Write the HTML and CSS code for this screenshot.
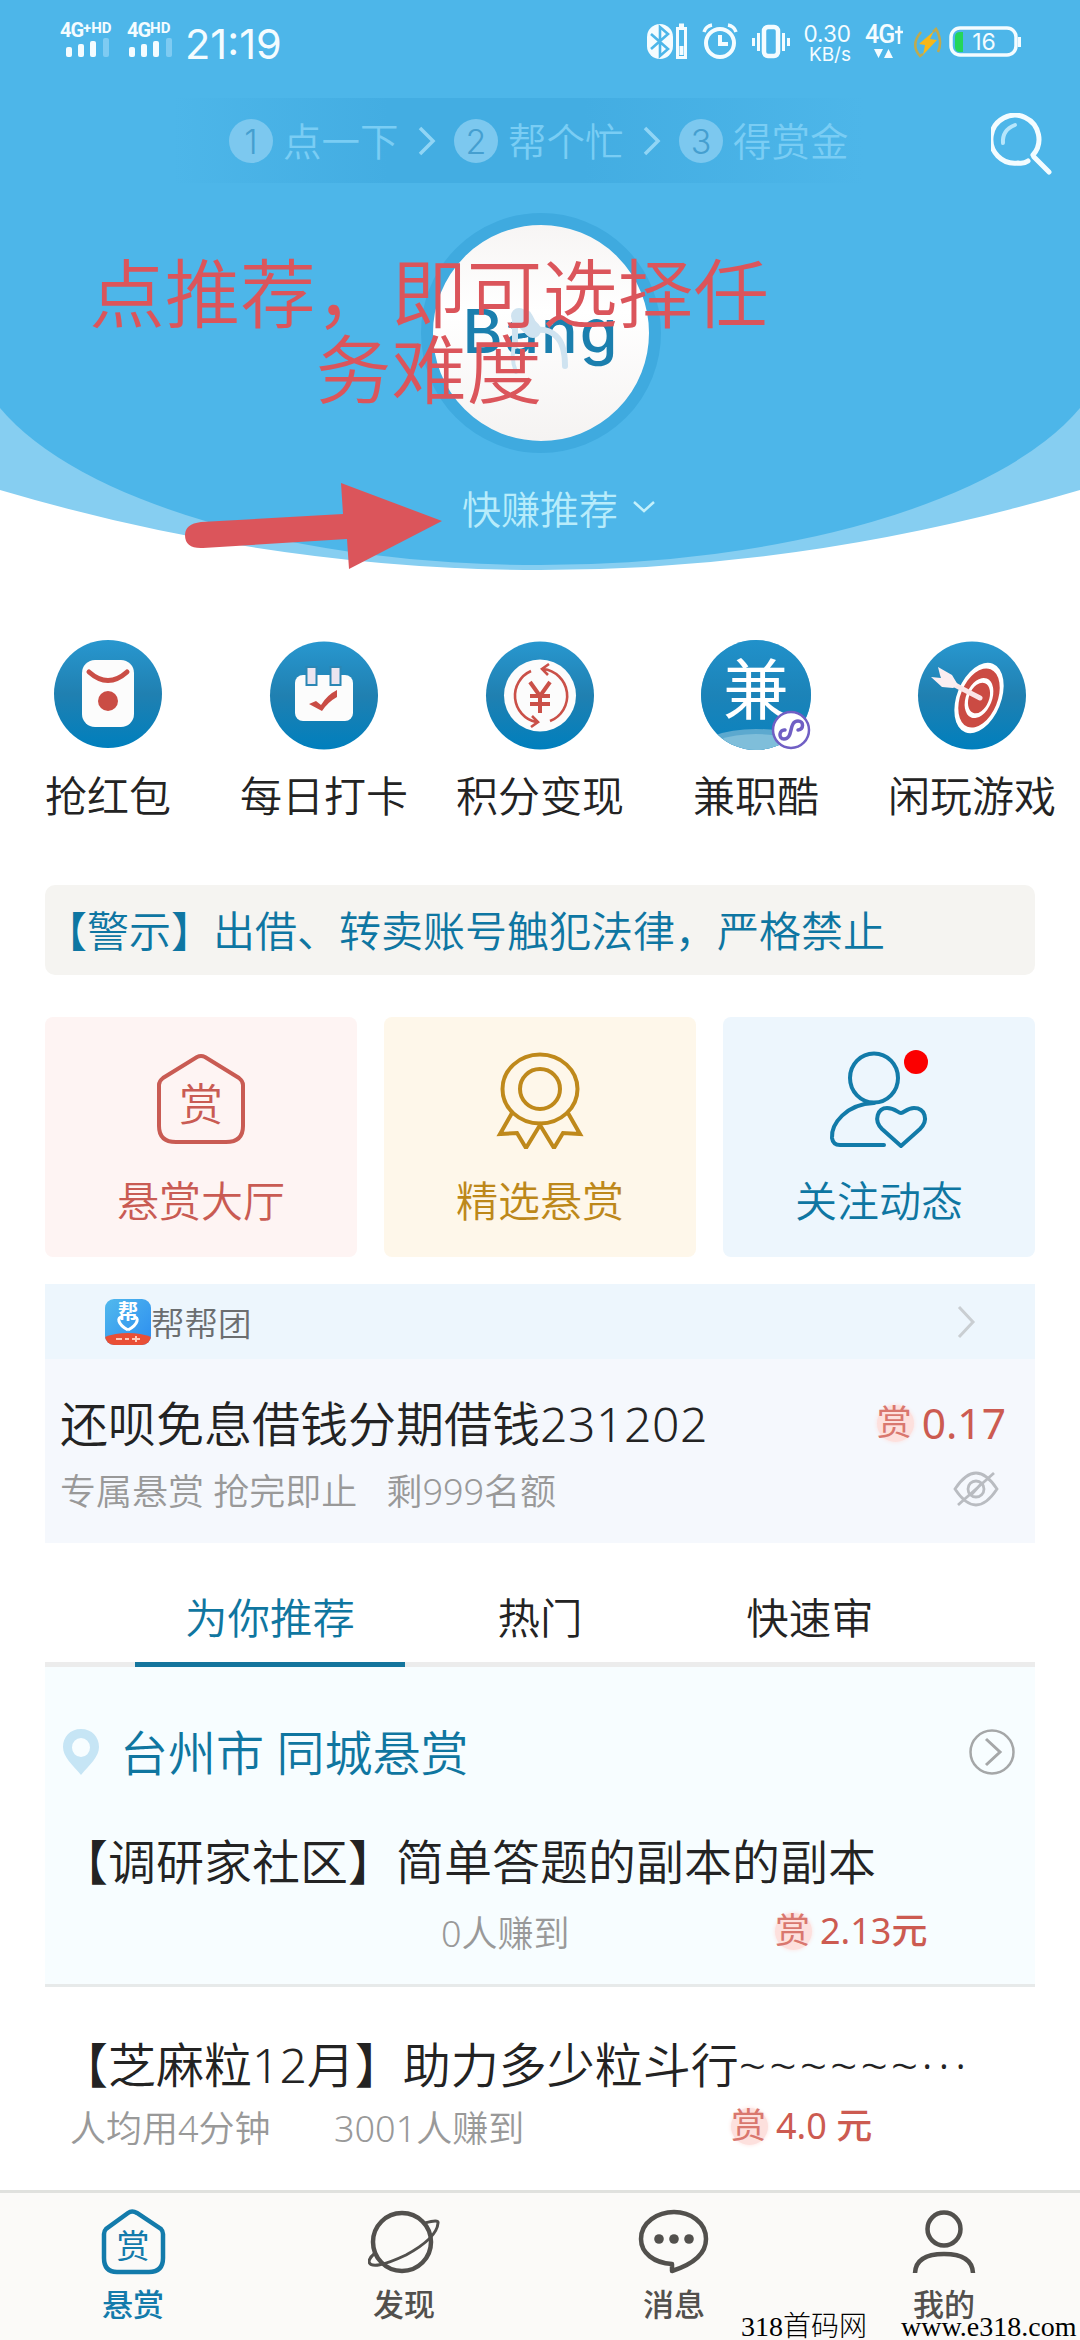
FILE: index.html
```html
<!DOCTYPE html>
<html lang="zh-CN">
<head>
<meta charset="utf-8">
<title>悬赏</title>
<link rel="stylesheet" href="styles.css">
</head>
<body>
<div class="screen">
  <header class="hero">
    <svg class="hero-bg" width="1080" height="570" viewBox="0 0 1080 570">
      <path d="M0 0H1080V490Q540 650 0 490Z" fill="#86cef1"/>
      <path d="M0 0H1080V408A570 231 0 0 1 0 408Z" fill="#4db6e9"/>
    </svg>
    <div class="status">
      <div class="signal">
        <div class="net">4G<sup>+HD</sup></div>
        <svg width="46" height="20" viewBox="0 0 46 20"><g fill="#f4fcff"><rect x="1" y="9" width="6" height="10" rx="2"/><rect x="13" y="6" width="6" height="13" rx="2"/><rect x="25" y="3" width="6" height="16" rx="2"/></g><rect x="38" y="0" width="6" height="19" rx="2" fill="#7ecbf2"/></svg>
      </div>
      <div class="signal signal-two">
        <div class="net">4G<sup>HD</sup></div>
        <svg width="46" height="20" viewBox="0 0 46 20"><g fill="#f4fcff"><rect x="1" y="9" width="6" height="10" rx="2"/><rect x="13" y="6" width="6" height="13" rx="2"/><rect x="25" y="3" width="6" height="16" rx="2"/></g><rect x="38" y="0" width="6" height="19" rx="2" fill="#7ecbf2"/></svg>
      </div>
      <div class="clock">21:19</div>
      <svg class="status-icons" width="150" height="40" viewBox="0 0 150 40" fill="none" stroke="#f4fcff">
        <rect x="3" y="2" width="26" height="35" rx="13" fill="#f4fcff" stroke="none"/>
        <path d="M7 12L24 27L16 34V5L24 12L7 27" stroke="#4db6e9" stroke-width="2.6"/>
        <rect x="33.5" y="6.500" width="8" height="29" stroke-width="3"/><path d="M35 3.500h5" stroke-width="4"/><rect x="35.500" y="24" width="4" height="9" fill="#f4fcff" stroke="none"/>
        <circle cx="76" cy="21" r="14" stroke-width="4"/><path d="M76 13v9h8" stroke-width="4"/><path d="M60 10q2-6 8-7M84 3q6 1 8 7" stroke-width="3.500"/>
        <rect x="120" y="5" width="14" height="29" rx="4" stroke-width="4.500"/><path d="M114.500 11v18M109.500 16v8M139.500 11v18M144.500 16v8" stroke-width="3"/>
      </svg>
      <div class="speed"><span>0.30</span><span>KB/s</span></div>
      <div class="data"><span>4G<svg width="8" height="19" viewBox="0 0 8 19"><path d="M4 0v18M0 6h8" stroke="#f4fcff" stroke-width="2.500"/></svg></span>
        <svg width="20" height="10" viewBox="0 0 20 10"><path d="M0 0h9L4.500 9zM10 9h9L14.500 0z" fill="#f4fcff"/></svg></div>
      <svg class="bolt" width="30" height="32" viewBox="0 0 30 32"><path d="M21 4L6 17l6 1-2 10 14-15-7-1z" fill="#f7b718"/><path d="M8 5Q-3 18 7 29l3-2M20 5l3-3q7 12 2 23" fill="none" stroke="#c0aa4d" stroke-width="2.500"/></svg>
      <svg class="battery" width="74" height="32" viewBox="0 0 74 32"><rect x="2" y="2" width="65" height="27" rx="9" fill="none" stroke="#f4fcff" stroke-width="3.500"/><path d="M14 6v20h-3q-5 0-5-5V11q0-5 5-5z" fill="#24d65a"/><path d="M70.500 11v10" stroke="#f4fcff" stroke-width="3"/><text x="35" y="24" text-anchor="middle" class="battery-text">16</text></svg>
    </div>
    <div class="steps-row">
      <div class="steps">
        <span class="num">1</span><span class="step">点一下</span>
        <svg class="sep" width="18" height="32" viewBox="0 0 18 32"><path d="M2 3l13 13L2 29"/></svg>
        <span class="num">2</span><span class="step">帮个忙</span>
        <svg class="sep" width="18" height="32" viewBox="0 0 18 32"><path d="M2 3l13 13L2 29"/></svg>
        <span class="num">3</span><span class="step">得赏金</span>
      </div>
      <svg class="search" width="62" height="62" viewBox="0 0 62 62" fill="none" stroke="#f3fcff" stroke-linecap="round"><path d="M37 48Q33 51 27 50A24 24 0 1 1 42 42" stroke-width="5"/><path d="M43 44L58 59" stroke-width="5"/><path d="M12 30Q11 17 24 12" stroke="#b6e6fb" stroke-width="4"/></svg>
    </div>
    <div class="disc">
      <span>Bang</span>
      <svg class="touch" width="80" height="74" viewBox="0 0 80 74" fill="none" stroke="#cfe3f0" stroke-linecap="round"><path d="M14 44V18Q16 7 27 12Q37 27 29 30Q44 24 55 34Q64 42 64 64" stroke-width="6"/><path d="M18 14L32 28" stroke-width="16"/><path d="M14 40q-5 15 1 30" stroke-width="4"/></svg>
    </div>
    <div class="pick"><span>快赚推荐</span><svg width="24" height="14" viewBox="0 0 24 14"><path d="M2 2l10 9L22 2" fill="none" stroke="#c4f0fb" stroke-width="2.500"/></svg></div>
    <div class="note">点推荐，即可选择任<br>务难度</div>
    <svg class="arrow" width="264" height="92" viewBox="0 0 264 92"><path d="M160 2L261 40L168 88L166 58L22 67Q4 68 4 54Q4 43 20 41L162 33Z" fill="#db555b"/></svg>
  </header>

  <nav class="shortcuts">
    <a class="shortcut"><svg width="110" height="112" viewBox="0 0 110 112">
      <defs><linearGradient id="blue" x1="0" y1="0" x2="0" y2="1"><stop offset="0" stop-color="#2897cf"/><stop offset=".5" stop-color="#2080b1"/><stop offset="1" stop-color="#007fbd"/></linearGradient></defs>
      <circle cx="55" cy="55" r="54" fill="url(#blue)"/><rect x="29" y="21" width="52" height="67" rx="13" fill="#fcfcfc"/><path d="M36 33Q55 50 74 33" fill="none" stroke="#ca4d45" stroke-width="5" stroke-linecap="round"/><circle cx="55" cy="62" r="10" fill="#ca4d45"/></svg><span>抢红包</span></a>
    <a class="shortcut"><svg width="110" height="112" viewBox="0 0 110 112"><circle cx="55" cy="56.500" r="54" fill="url(#blue)"/><rect x="26" y="36" width="58" height="46" rx="8" fill="#fcfcfc"/><rect x="37.500" y="28" width="10" height="18" fill="#ece5f0" stroke="#2b86b4" stroke-width="2"/><rect x="61.500" y="28" width="10" height="18" fill="#ece5f0" stroke="#2b86b4" stroke-width="2"/><path d="M40 65l7-3 5 4q6-10 16-15v7q-9 5-15 14z" fill="#c94c45"/></svg><span>每日打卡</span></a>
    <a class="shortcut"><svg width="110" height="112" viewBox="0 0 110 112"><circle cx="55" cy="56.500" r="54" fill="url(#blue)"/><circle cx="55" cy="56.500" r="36" fill="#fcfcfc"/><g fill="none" stroke="#ca5048"><path d="M46 32A27 27 0 0 0 51 83M47 77l6 6-7 5M65 82A27 27 0 0 0 58 30M64 25l-7 5 6 6" stroke-width="2.600"/><path d="M45 43l10 14 10-14M55 57v17M45 57h20M45 65h20" stroke-width="4"/></g></svg><span>积分变现</span></a>
    <a class="shortcut"><svg width="110" height="112" viewBox="0 0 110 112"><defs><clipPath id="disc-clip"><circle cx="55" cy="56" r="55"/></clipPath></defs><circle cx="55" cy="56" r="55" fill="#1688c3"/><circle cx="55" cy="56" r="55" fill="url(#blue)" opacity=".6"/><g clip-path="url(#disc-clip)"><ellipse cx="55" cy="113" rx="60" ry="23" fill="#5ca9cf"/><ellipse cx="55" cy="115" rx="52" ry="20" fill="#7fbeda"/></g><text x="55" y="75" text-anchor="middle" class="jian">兼</text><circle cx="90" cy="91" r="18" fill="#fff" stroke="#705fc4" stroke-width="2.500"/><path d="M84 91c-6-1-7 9-1 9 10 0 4-18 14-18 6 0 6 8 0 9" fill="none" stroke="#705fc4" stroke-width="3.500" stroke-linecap="round"/></svg><span>兼职酷</span></a>
    <a class="shortcut"><svg width="110" height="112" viewBox="0 0 110 112"><circle cx="55" cy="56.500" r="54" fill="url(#blue)"/><g transform="rotate(22 62 59)"><ellipse cx="62" cy="59" rx="22" ry="37" fill="#fff"/><ellipse cx="62" cy="59" rx="18.500" ry="31" fill="#cb4b43"/><ellipse cx="62" cy="59" rx="13" ry="21" fill="#fff"/><ellipse cx="62" cy="59" rx="10" ry="16" fill="#cb4b43"/></g><path d="M63 59L36 45" stroke="#fbe5e7" stroke-width="5" stroke-linecap="round"/><path d="M41 46l-6-10-14-8 2 8 1 3-10-1 11 10 11 1z" fill="#fbeef1"/></svg><span>闲玩游戏</span></a>
  </nav>

  <div class="notice">【警示】出借、转卖账号触犯法律，严格禁止</div>

  <section class="cards">
    <div class="card red"><svg width="100" height="96" viewBox="0 0 100 96"><path d="M46 6q4-2 8 0L88 27q4 3 4 7V75Q92 91 75 91H25Q8 91 8 75V34q0-4 4-7Z" fill="none" stroke="#c95b53" stroke-width="4"/><text x="50" y="70" text-anchor="middle" class="house-text">赏</text></svg><span>悬赏大厅</span></div>
    <div class="card gold"><svg width="100" height="98" viewBox="0 0 100 98" fill="none" stroke="#bf891b" stroke-width="4"><ellipse cx="50" cy="38" rx="37.500" ry="34.500"/><circle cx="50" cy="38" r="20"/><path d="M22 62L10 83l17-1 9 15L50 74 64 97l9-15 17 1L78 62"/></svg><span>精选悬赏</span></div>
    <div class="card blue"><svg width="100" height="98" viewBox="0 0 100 98" fill="none" stroke="#127ba9" stroke-width="4" stroke-linecap="round" stroke-linejoin="round"><ellipse cx="45" cy="27" rx="24" ry="24.500"/><path d="M45 52C17 53 2 73 3 87q1 7 8 7h44"/><path d="M72 95L53 78c-9-9-4-21 5-21 8 0 11 5 14 5 3 0 6-5 13-5 11 0 15 12 6 21Z"/></svg><i class="dot"></i><span>关注动态</span></div>
  </section>

  <section class="group">
    <div class="group-head">
      <svg width="46" height="46" viewBox="0 0 46 46"><defs><linearGradient id="app" x1="0" y1="0" x2="1" y2="1"><stop offset="0" stop-color="#51b9ed"/><stop offset="1" stop-color="#2c8df0"/></linearGradient><clipPath id="app-clip"><rect width="46" height="46" rx="9"/></clipPath></defs><g clip-path="url(#app-clip)"><rect width="46" height="46" fill="url(#app)"/><ellipse cx="23" cy="47" rx="32" ry="13" fill="#e94f36"/></g><text x="23" y="20" text-anchor="middle" class="app-text">帮</text><path d="M23 31C12 25 12 18 17 18M29 18c5 0 5 7-6 13" fill="none" stroke="#fff" stroke-width="3"/><path d="M11 40h6M20 40h4M27 40h8M31 37v6" stroke="#ffc9b8" stroke-width="2"/></svg>
      <span>帮帮团</span>
      <svg class="go" width="20" height="34" viewBox="0 0 20 34"><path d="M3 2l14 15L3 32" fill="none" stroke="#c9ced2" stroke-width="3"/></svg>
    </div>
    <div class="group-body">
      <div class="line"><h2>还呗免息借钱分期借钱<span class="digits">231202</span></h2><div class="reward big"><b>赏</b>0.17</div></div>
      <div class="line sub"><p>专属悬赏 抢完即止<span class="left-num">剩999名额</span></p><svg width="46" height="36" viewBox="0 0 46 36" fill="none" stroke="#b9bcc1" stroke-width="2.800"><path d="M2 18Q23-14 44 18Q23 50 2 18Z"/><circle cx="23" cy="18" r="8"/><path d="M5 34L41 2M18 24L28 13"/></svg></div>
    </div>
  </section>

  <div class="tabs"><a class="active">为你推荐</a><a>热门</a><a>快速审</a></div>

  <section class="local">
    <div class="place"><svg width="38" height="46" viewBox="0 0 38 46"><path d="M19 0C8 0 1 8 1 18c0 10 9 17 18 28 9-11 18-18 18-28C37 8 30 0 19 0Zm0 9a9 9.500 0 1 1 0 19 9 9.500 0 0 1 0-19Z" fill="#c6e5f5"/></svg><span>台州市 同城悬赏</span>
      <svg class="circle-go" width="46" height="46" viewBox="0 0 46 46" fill="none" stroke="#a5a7a8" stroke-width="2.500"><circle cx="23" cy="23" r="21.500"/><path d="M17 10l14 13-14 13" stroke-width="3"/></svg></div>
    <h3>【调研家社区】简单答题的副本的副本</h3>
    <div class="meta"><span class="earned-first">0人赚到</span><div class="reward reward-first"><b>赏</b>2.13元</div></div>
  </section>

  <section class="task">
    <h3>【芝麻粒12月】助力多少粒斗行<span class="tilde">~~~~~~</span><span class="dots">···</span></h3>
    <div class="meta"><span class="avg">人均用4分钟</span><span class="earned">3001人赚到</span><div class="reward"><b>赏</b>4.0 元</div></div>
  </section>

  <footer class="tabbar">
    <a class="on"><svg width="72" height="66" viewBox="0 0 72 66"><path d="M31 4q4-3 9 0L64 20q2 2 2 5V49Q66 63 52 63H20Q7 63 7 49V25q0-3 2-5Z" fill="none" stroke="#137bab" stroke-width="4.500"/><text x="36" y="49" text-anchor="middle" class="nav-house">赏</text></svg><span>悬赏</span></a>
    <a><svg width="72" height="66" viewBox="0 0 72 66" fill="none" stroke="#52504d"><circle cx="34" cy="33" r="29" stroke-width="4.500"/><path d="M57 14q14-4 13 0Q69 29 38 46 4 62 1 53q0-4 6-9" stroke-width="3"/></svg><span>发现</span></a>
    <a><svg width="72" height="66" viewBox="0 0 72 66" fill="none" stroke="#52504d"><path d="M34 62Q68 51 68 30C68 13 52 3 36 3S3 13 3 30C3 44 16 54 34 55Z" stroke-width="4.500" stroke-linejoin="round"/><g fill="#52504d" stroke="none"><circle cx="21" cy="30" r="4.800"/><circle cx="36" cy="30" r="4.800"/><circle cx="51" cy="30" r="4.800"/></g></svg><span>消息</span></a>
    <a><svg width="72" height="66" viewBox="0 0 72 66" fill="none" stroke="#52504d" stroke-width="4.500"><circle cx="36" cy="20" r="16.500"/><path d="M7 64Q8 45 36 45T65 64"/></svg><span>我的</span></a>
    <div class="site"><span>318首码网</span><span>www.e318.com</span></div>
  </footer>
</div>
</body>
</html>
```

FILE: styles.css
```css
* { box-sizing: border-box; }
body { margin: 0; background: #fff; font-family: "Noto Sans", "Noto Sans CJK SC", sans-serif; font-weight: 350; color: #232323; }
h2, h3, p { margin: 0; font-weight: 350; }
svg { display: block; flex: none; }
.screen { position: relative; width: 1080px; height: 2340px; overflow: hidden; display: flex; flex-direction: column; white-space: nowrap; }
.screen > * { flex: none; }

.hero { position: relative; height: 570px; color: #f4fcff; display: flex; flex-direction: column; align-items: center; }
.hero > * { position: relative; }
.hero > .hero-bg { position: absolute; left: 0; top: 0; }
.status { width: 1080px; height: 98px; padding: 22px 0 0 60px; display: flex; align-items: flex-start; font-family: Roboto, sans-serif; font-weight: 400; }
.signal { width: 67px; }
.signal svg { margin: 0 0 0 5px; }
.signal-two { width: 58px; }
.signal-two svg { margin-left: 1px; }
.net { height: 16px; font-size: 20px; line-height: 16px; font-weight: 700; letter-spacing: -1px; display: flex; }
.net sup { font-size: 15px; line-height: 12px; letter-spacing: 0; }
.clock { width: 102px; font-family: Inter, sans-serif; font-size: 41.500px; line-height: 45px; letter-spacing: 0; }
.status-icons { margin-left: 357px; }
.speed { width: 56px; margin-left: 1px; padding-top: 1px; display: flex; flex-direction: column; align-items: flex-end; font: 400 22.500px/21px Inter, sans-serif; }
.speed span:last-child { font-size: 19px; }
.data { width: 40px; margin-left: 14px; font-size: 25px; font-weight: 500; line-height: 26px; letter-spacing: -1px; }
.data span { display: flex; align-items: center; gap: 1px; }
.data > svg { margin: 1px 0 0 9px; }
.bolt { margin: 5px 0 0 8px; }
.battery { margin: 4px 0 0 6px; }
.battery-text { font: 400 23px Inter, sans-serif; fill: #f4fcff; }

.steps-row { width: 1080px; height: 85px; display: flex; align-items: center; padding-left: 190px; background: linear-gradient(90deg, #46aee200 16%, #43ade2 36%, #43ade2 54%, #46aee200 80%); }
.steps { display: flex; align-items: center; width: 801px; padding-left: 39px; font-size: 38.500px; line-height: 60px; color: #7acdf4; }
.num { width: 44px; height: 44px; border-radius: 50%; background: #7cc8ef; color: #459fd0; font: 300 34px/45px Inter, sans-serif; text-align: center; }
.step { width: 115px; margin-left: 10px; }
.sep { margin: 0 18px 0 20px; fill: none; stroke: #90d5f5; stroke-width: 3.5; }
.search { margin-top: 7px; }
.disc { width: 240px; height: 240px; margin: 30px 0 0 2px; border: 12px solid #3faadf; border-radius: 50%; background: linear-gradient(#f7f5f4, #fff 40%, #f5f3f2); color: #1b7fae; font: 450 61px/212px Inter, sans-serif; text-align: center; letter-spacing: 2px; }
.touch { position: absolute; left: 68px; top: 77px; }
.pick { display: flex; align-items: center; gap: 14px; height: 60px; margin: 24px 0 0 38px; font-size: 39px; color: #b8ecfb; }
.hero > .note { position: absolute; left: 87px; top: 255px; width: 684px; text-align: center; font-size: 75.5px; line-height: 76px; color: #db555b; }
.hero > .arrow { position: absolute; left: 181px; top: 481px; }

.shortcuts { height: 285px; padding-top: 69px; display: grid; grid-template-columns: repeat(5, 216px); }
.shortcut { display: flex; flex-direction: column; align-items: center; gap: 15px; font-size: 42px; line-height: 60px; }
.jian { font: 400 66px "Noto Sans CJK SC", sans-serif; fill: #fff; }
.notice { margin: 30px 45px 0; height: 90px; border-radius: 10px; background: #f5f4f1; color: #0e76a2; font-size: 42px; line-height: 91px; }
.cards { margin: 42px 45px 0; display: grid; grid-template-columns: repeat(3, 1fr); gap: 27px; }
.card { position: relative; height: 240px; padding-top: 34px; border-radius: 8px; display: flex; flex-direction: column; align-items: center; justify-content: space-between; padding-bottom: 26px; font-size: 42px; line-height: 60px; }
.red { background: #fef4f3; color: #c95b53; }
.gold { background: #fef7ea; color: #bd881a; }
.blue { background: #edf6fd; color: #0e76a2; }
.house-text { font-size: 44px; fill: #c95b53; }
.dot { position: absolute; left: 181px; top: 33px; width: 24px; height: 24px; border-radius: 50%; background: #fb0000; }

.group { margin: 27px 45px 0; height: 259px; background: #f5f8fd; }
.group-head { height: 75px; display: flex; align-items: center; padding: 0 59px 0 60px; background: #edf6fd; font-size: 33.500px; color: #6b6e70; }
.app-text { font: 700 20px "Noto Sans CJK SC", sans-serif; fill: #fff; }
.go { margin-left: auto; }
.group-body { padding: 35px 29px 0 15px; }
.line { display: flex; justify-content: space-between; align-items: center; height: 60px; }
.line h2 { font-size: 48px; line-height: 60px; }
.digits { letter-spacing: .6px; }
.sub { height: 56px; margin-top: 7px; padding-right: 7px; font-size: 36px; color: #999; }
.left-num { margin-left: 29px; }
.reward { display: flex; align-items: center; color: #cc5b51; font-size: 36px; line-height: 50px; font-weight: 450; }
.reward b { width: 37px; height: 37px; margin-right: 8px; border-radius: 50%; background: #fde0dd; box-shadow: 0 0 4px #fde0dd; font-size: 35px; font-weight: 400; line-height: 34px; color: #d9776e; }
.big { font-size: 42.500px; margin-top: -2px; }

.tabs { margin: 27px 45px 0; padding-left: 90px; height: 97px; border-bottom: 5px solid #ececec; display: flex; }
.tabs a { width: 270px; height: 97px; text-align: center; font-size: 42.500px; line-height: 95px; }
.tabs .active { color: #0f76a0; border-bottom: 5px solid #14759d; }
.local { margin: 0 45px; height: 320px; background: #f7fdff; border-bottom: 3px solid #e7eaea; }
.place { height: 130px; padding: 62px 20px 0 17px; display: flex; align-items: flex-start; gap: 20px; color: #0f76a0; font-size: 48px; line-height: 48px; }
.circle-go { margin-left: auto; }
h3 { padding-left: 15px; font-size: 48px; line-height: 64px; height: 64px; }
.local h3 { margin-top: 33px; }
.meta { display: flex; align-items: center; height: 50px; margin-top: 12px; font-size: 36px; color: #999; }
.earned-first { width: 333px; margin-left: 396px; }
.reward-first { padding-left: 1px; }
.task { margin: 0 45px; height: 203px; padding-top: 46px; }
.task .meta { margin-top: 4px; }
.avg { width: 263px; padding-left: 25px; }
.earned { width: 423px; padding-left: 26px; }
.tilde { letter-spacing: 3px; }
.dots { letter-spacing: 5px; }

.tabbar { position: relative; height: 150px; border-top: 3px solid #e0e1de; background: #fbfaf8; display: grid; grid-template-columns: repeat(4, 270px); color: #52504d; }
.tabbar a { display: flex; flex-direction: column; align-items: center; padding: 16px 2px 0 0; gap: 8px; font-size: 31px; line-height: 42px; font-weight: 500; }
.tabbar .on { padding-right: 4px; color: #137bab; }
.nav-house { font-size: 33px; font-weight: 400; fill: #137bab; }
.site { position: absolute; left: 741px; top: 117px; display: flex; gap: 34px; color: #000; font: 400 28px/34px "Liberation Serif", "Noto Sans CJK SC", serif; }
.site span:first-child { font-weight: 300; }
```
